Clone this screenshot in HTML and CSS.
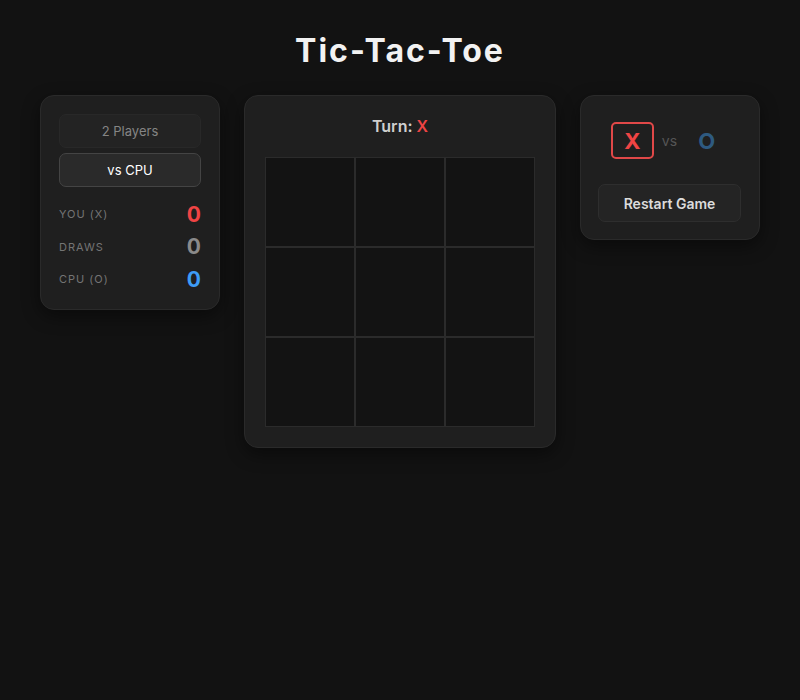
FILE: index.html
```html
<!DOCTYPE html>
<html>
<head>
<meta charset="utf-8">
<link rel="stylesheet" href="styles.css">
</head>
<body>
<h1 class="title">Tic-Tac-Toe</h1>
<div class="layout">
  <div class="card side left">
    <div class="modes">
      <button class="mode">2 Players</button>
      <button class="mode active">vs CPU</button>
    </div>
    <div class="scores">
      <div class="row"><span class="label">YOU (X)</span><span class="num red">0</span></div>
      <div class="row"><span class="label">DRAWS</span><span class="num gray">0</span></div>
      <div class="row"><span class="label">CPU (O)</span><span class="num blue">0</span></div>
    </div>
  </div>
  <div class="card center">
    <div class="turn">Turn: <span class="red">X</span></div>
    <div class="board">
      <div class="cell"></div><div class="cell"></div><div class="cell"></div>
      <div class="cell"></div><div class="cell"></div><div class="cell"></div>
      <div class="cell"></div><div class="cell"></div><div class="cell"></div>
    </div>
  </div>
  <div class="card side right">
    <div class="players">
      <div class="pbox xbox">X</div>
      <span class="vs">vs</span>
      <div class="pbox obox">O</div>
    </div>
    <button class="restart">Restart Game</button>
  </div>
</div>
</body>
</html>
```
FILE: styles.css
```css
* { box-sizing: border-box; }
html, body { margin: 0; padding: 0; }
body {
  background: #121212;
  font-family: Inter, "Noto Sans", sans-serif;
  color: #ddd;
  width: 800px;
  height: 700px;
}
.title {
  margin: 0;
  padding-top: 31px;
  height: 95px;
  text-align: center;
  font-size: 32px;
  line-height: 40px;
  font-weight: 700;
  letter-spacing: 2px;
  color: #f2f2f2;
}
.layout {
  display: flex;
  justify-content: center;
  align-items: flex-start;
  gap: 24px;
}
.card {
  background: #1f1f1f;
  border: 1px solid #2a2a2a;
  border-radius: 14px;
  box-shadow: 0 6px 18px rgba(0,0,0,0.45);
}
.side { width: 180px; }
.left { padding: 18px 18px 13px; }
.modes { display: flex; flex-direction: column; gap: 5px; }
.mode {
  height: 34px;
  border-radius: 7px;
  border: 1px solid #282828;
  background: #232323;
  color: #858585;
  font-family: inherit;
  font-size: 13px;
}
.mode.active {
  background: #2a2a2a;
  border-color: #444;
  color: #fff;
}
.scores { margin-top: 11px; }
.row {
  display: flex;
  justify-content: space-between;
  align-items: center;
  height: 32.5px;
}
.label {
  font-size: 11px;
  letter-spacing: 1px;
  color: #747474;
}
.num { font-size: 21px; font-weight: 700; }
.red { color: #ef4444; }
.gray { color: #8a8a8a; }
.blue { color: #3d9cf5; }
.center { width: 312px; padding: 20px; }
.turn {
  text-align: center;
  font-size: 16px;
  line-height: 20px;
  font-weight: 600;
  color: #cfcfcf;
}
.board {
  margin-top: 21px;
  display: grid;
  grid-template-columns: repeat(3, 1fr);
  grid-template-rows: repeat(3, 1fr);
  gap: 2px;
  padding: 1px;
  background: #2b2b2b;
  width: 270px;
  height: 270px;
}
.cell { background: #131313; }
.right { padding: 18px 18px 17px 17px; }
.players {
  display: flex;
  justify-content: center;
  align-items: center;
  gap: 8px;
  padding: 8px 0;
}
.pbox {
  width: 43px;
  height: 37px;
  border: 2px solid transparent;
  border-radius: 5px;
  display: flex;
  align-items: center;
  justify-content: center;
  font-size: 22px;
  font-weight: 700;
}
.xbox { border-color: #e04848; color: #ef4444; }
.obox { color: #2e5a80; }
.vs { font-size: 14px; color: #555; }
.restart {
  margin-top: 17px;
  width: 143px;
  height: 38px;
  border-radius: 7px;
  border: 1px solid #2e2e2e;
  background: #242424;
  color: #dcdcdc;
  font-family: inherit;
  font-size: 14px;
  font-weight: 600;
}
```
